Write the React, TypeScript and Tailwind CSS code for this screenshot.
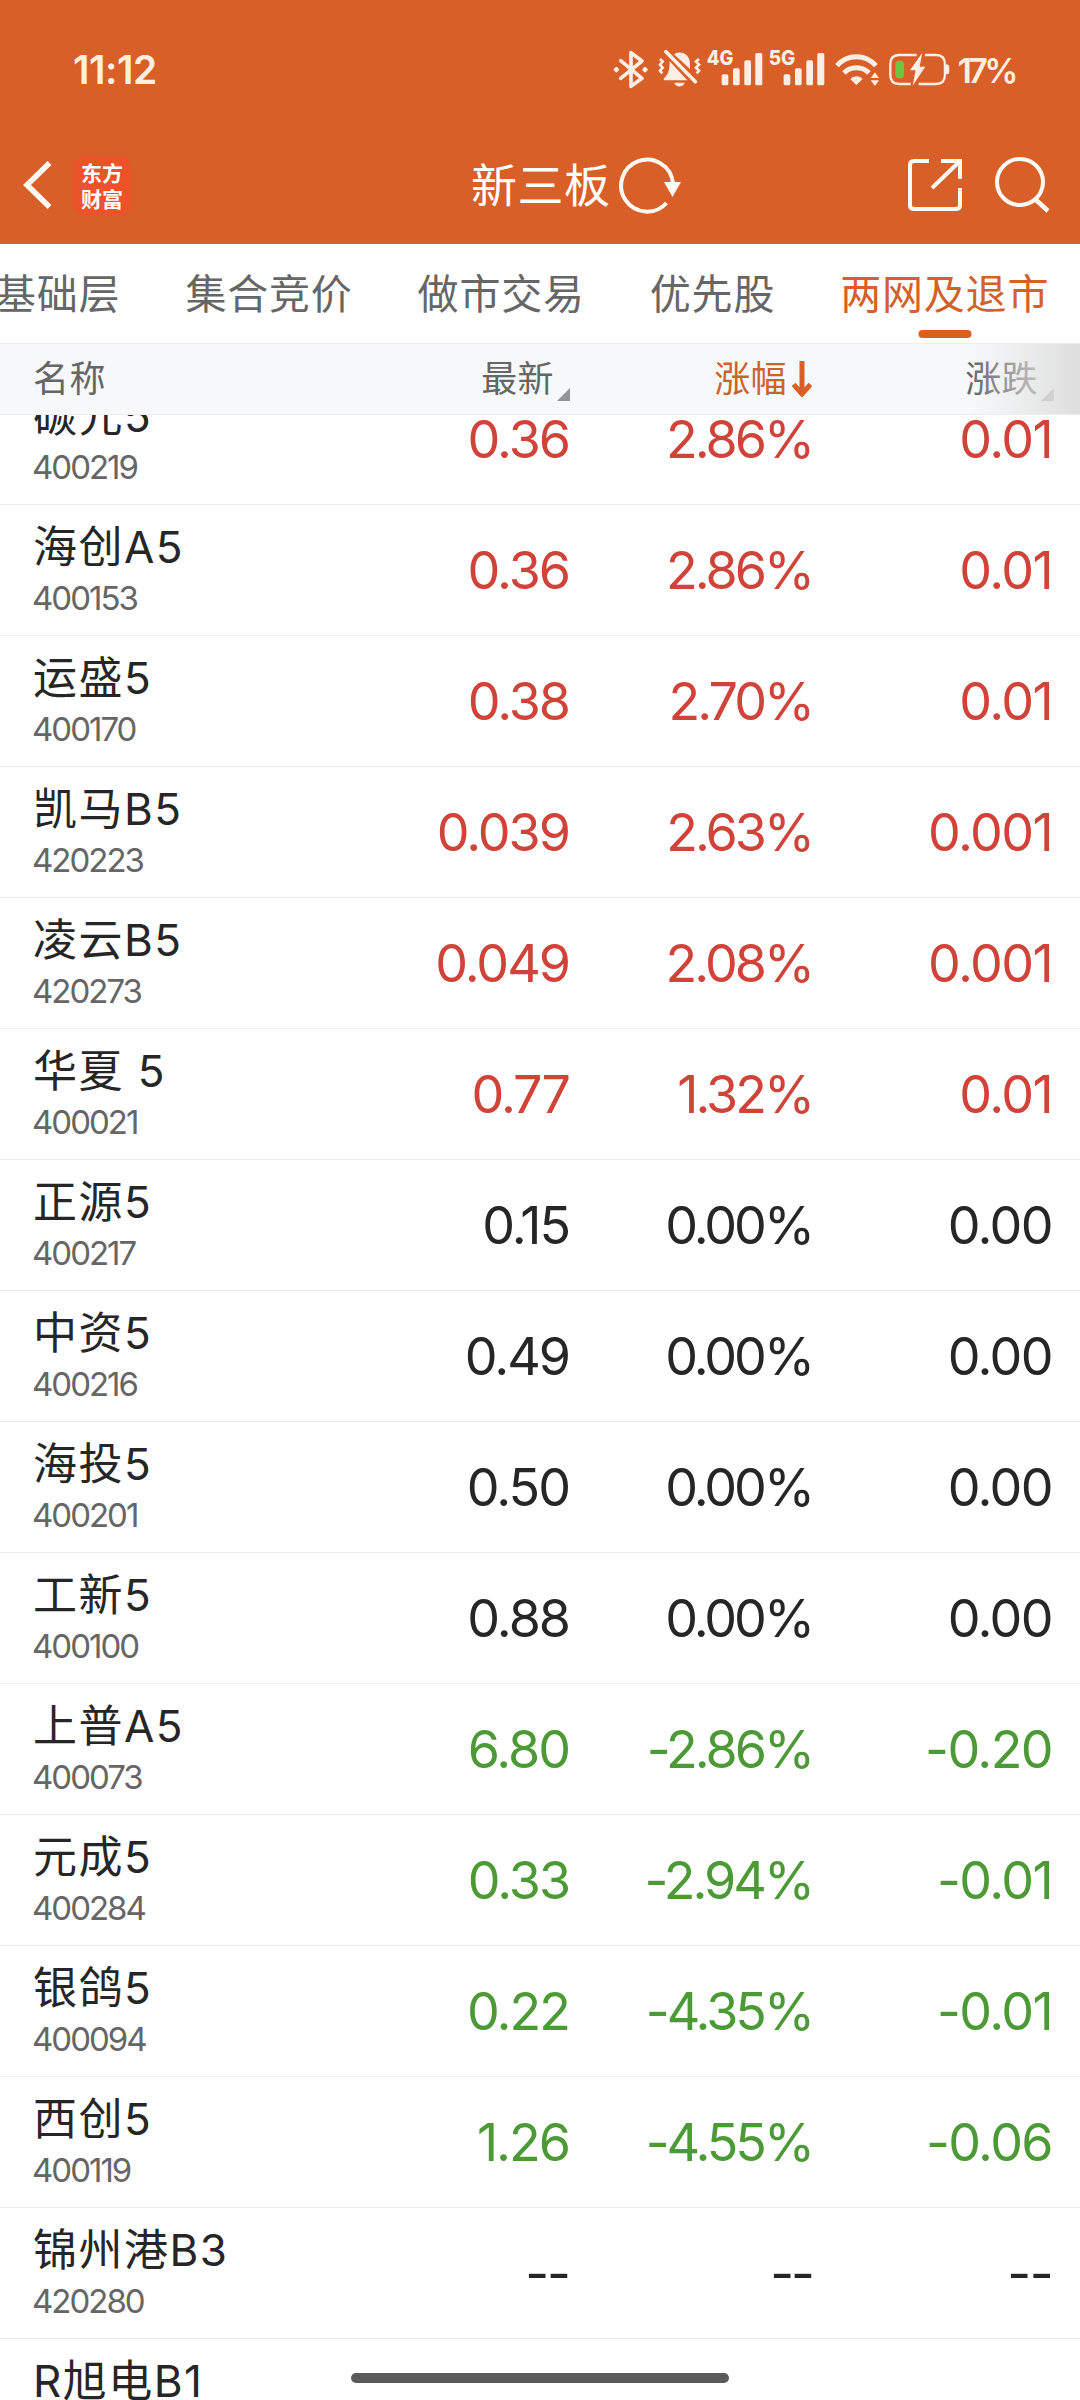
type Tone = 'up' | 'flat' | 'down'

type Stock = {
  name: string
  code: string
  price: string
  percent: string
  change: string
  tone: Tone
}

const tabs = ['基础层', '集合竞价', '做市交易', '优先股', '两网及退市']

const stocks: Stock[] = [
  { name: '碳元5', code: '400219', price: '0.36', percent: '2.86%', change: '0.01', tone: 'up' },
  { name: '海创A5', code: '400153', price: '0.36', percent: '2.86%', change: '0.01', tone: 'up' },
  { name: '运盛5', code: '400170', price: '0.38', percent: '2.70%', change: '0.01', tone: 'up' },
  { name: '凯马B5', code: '420223', price: '0.039', percent: '2.63%', change: '0.001', tone: 'up' },
  { name: '凌云B5', code: '420273', price: '0.049', percent: '2.08%', change: '0.001', tone: 'up' },
  { name: '华夏 5', code: '400021', price: '0.77', percent: '1.32%', change: '0.01', tone: 'up' },
  { name: '正源5', code: '400217', price: '0.15', percent: '0.00%', change: '0.00', tone: 'flat' },
  { name: '中资5', code: '400216', price: '0.49', percent: '0.00%', change: '0.00', tone: 'flat' },
  { name: '海投5', code: '400201', price: '0.50', percent: '0.00%', change: '0.00', tone: 'flat' },
  { name: '工新5', code: '400100', price: '0.88', percent: '0.00%', change: '0.00', tone: 'flat' },
  { name: '上普A5', code: '400073', price: '6.80', percent: '-2.86%', change: '-0.20', tone: 'down' },
  { name: '元成5', code: '400284', price: '0.33', percent: '-2.94%', change: '-0.01', tone: 'down' },
  { name: '银鸽5', code: '400094', price: '0.22', percent: '-4.35%', change: '-0.01', tone: 'down' },
  { name: '西创5', code: '400119', price: '1.26', percent: '-4.55%', change: '-0.06', tone: 'down' },
  { name: '锦州港B3', code: '420280', price: '--', percent: '--', change: '--', tone: 'flat' },
]

const toneClass: Record<Tone, string> = {
  up: 'text-[#cf4339]',
  flat: 'text-[#262626]',
  down: 'text-[#4c9a35]',
}

function Bluetooth() {
  return (
    <svg viewBox="36 30 126 120" className="h-[40px] w-[42px]" fill="none" stroke="#ffeee4" strokeWidth="11" strokeLinejoin="round" strokeLinecap="round">
      <path d="M62 62 L126 115 L93 139 V38 L126 63 L62 115" />
      <path d="M49 83 l6 6 l-6 6 l-6 -6z M135 83 l6 6 l-6 6 l-6 -6z" fill="#ffeee4" strokeWidth="5" />
    </svg>
  )
}

function BellOff() {
  return (
    <svg viewBox="162 30 150 120" className="h-[40px] w-[50px]" fill="#ffeee4">
      <path d="M222 43 C232 32 270 34 270 72 V87 Z" />
      <path d="M209 64 L262 121 H194 C191 121 190 118 192 115 C202 106 209 96 209 64Z" />
      <path d="M223 128 H254 C250 143 227 143 223 128Z" />
      <path d="M198 35 L286 125" stroke="#ffeee4" strokeWidth="11" strokeLinecap="round" />
      <path d="M180 57 l8 8 l-8 9 l8 9 l-8 9 l7 8 M297 57 l-9 8 l9 9 l-9 9 l9 9 l-7 8" fill="none" stroke="#ffeee4" strokeWidth="8" />
    </svg>
  )
}

function Signal({ label }: { label: string }) {
  return (
    <svg viewBox="312 30 187 120" className="h-[40px] w-[62.3px] overflow-visible" fill="#ffeee4">
      <text x="320" y="76" fontSize="60" fontWeight="800" textLength="80" lengthAdjust="spacingAndGlyphs">{label}</text>
      <rect x="365" y="103" width="20" height="33" rx="5" />
      <rect x="399" y="85" width="20" height="51" rx="5" />
      <rect x="433" y="61" width="20" height="75" rx="5" />
      <rect x="466" y="39" width="21" height="97" rx="5" />
    </svg>
  )
}

function Wifi() {
  return (
    <svg viewBox="150 30 175 120" className="h-[40px] w-[58.3px]" fill="none" stroke="#ffeee4" strokeWidth="15">
      <path d="M174 77 C205 41 259 41 291 77" />
      <path d="M195 99 C214 78 250 78 270 99" />
      <path d="M214 117 C225 106 240 106 251 117 L232 135Z" fill="#ffeee4" stroke="none" />
      <path d="M275 114 L288 97 L300 114Z M275 121 L288 138 L300 121Z" fill="#ffeee4" stroke="none" />
    </svg>
  )
}

function Battery() {
  return (
    <svg viewBox="325 30 200 120" className="h-[40px] w-[66.6px]" fill="none" stroke="#ffeee4" strokeWidth="7">
      <path d="M414 45 H362 Q335 45 335 72 V105 Q335 132 362 132 H396" />
      <path d="M439 45 H472 Q499 45 499 72 V105 Q499 132 472 132 H420" />
      <path d="M502 73 Q512 73 512 82 V95 Q512 103 502 103Z" fill="#ffeee4" stroke="none" />
      <rect x="350" y="62" width="26" height="53" rx="11" fill="#6cc53f" stroke="none" />
      <path d="M431 38 L394 91 H411 L402 137 L440 80 H423Z" fill="#ffeee4" stroke="none" />
    </svg>
  )
}

function StatusBar() {
  return (
    <div className="flex h-[140px] items-center pl-[73px] text-[#ffeee4]">
      <span className="w-[539px] text-[39px] font-semibold tracking-[-0.5px]">11:12</span>
      <Bluetooth />
      <BellOff />
      <Signal label="4G" />
      <Signal label="5G" />
      <Wifi />
      <Battery />
      <span className="ml-[4px] text-[34px] font-semibold tracking-[-3.6px]">17%</span>
    </div>
  )
}

function TitleBar() {
  return (
    <div className="flex h-[104px] items-center pb-[14px] text-white">
      <svg viewBox="0 0 32 52" className="ml-[22px] h-[52px] w-[32px]" fill="none" stroke="#fffaf3" strokeWidth="5.5">
        <path d="M27.5 4 L5 26 L27.5 48" />
      </svg>
      <div className="ml-[19px] flex h-[59px] w-[58px] flex-col items-center justify-center rounded-[11px] bg-[#ec5329] font-['Noto_Sans_CJK_SC',sans-serif] text-[21px] leading-[26px] font-bold">
        <span>东方</span>
        <span>财富</span>
      </div>
      <h1 className="ml-[340px] w-[147px] text-[46px] leading-[60px] tracking-[0.5px] whitespace-nowrap">新三板</h1>
      <svg viewBox="0 0 66 60" className="h-[60px] w-[66px]" fill="none" stroke="#fffaf3" strokeWidth="4">
        <path d="M48.5 48 A26 26 0 1 1 55 28" />
        <path d="M46 27 H63 L54.5 42Z" fill="#fffaf3" stroke="none" />
      </svg>
      <svg viewBox="0 0 56 56" className="ml-[223px] h-[56px] w-[56px]" fill="none" stroke="#fffaf3" strokeWidth="4">
        <path d="M22 4 H7 Q3 4 3 8 V48 Q3 52 7 52 H49 Q53 52 53 48 V31" />
        <path d="M34 4 H53 V22 M52 5 L25 31" />
      </svg>
      <svg viewBox="0 0 60 60" className="ml-[31px] h-[60px] w-[60px]" fill="none" stroke="#fffaf3" strokeWidth="4">
        <circle cx="26" cy="27" r="23" />
        <path d="M41 44 L54 56" strokeWidth="4.5" />
      </svg>
    </div>
  )
}

function TabBar() {
  return (
    <nav className="flex h-[99px] gap-[65px] overflow-hidden text-[41px] leading-[50px] tracking-[0.8px] whitespace-nowrap text-[#666666]">
      {tabs.map((tab, i) => (
        <div key={tab} className={`relative flex h-full shrink-0 items-center ${i === 0 ? '-ml-[5px]' : ''} ${i === tabs.length - 1 ? 'text-[#d3612a]' : ''}`}>
          {tab}
          {i === tabs.length - 1 && (
            <span className="absolute bottom-[5px] left-1/2 h-[8px] w-[53px] -translate-x-1/2 rounded-full bg-[#d85f27]" />
          )}
        </div>
      ))}
    </nav>
  )
}

function SortMark() {
  return (
    <svg viewBox="0 0 13 13" className="mb-[13px] ml-[3px] h-[13px] w-[13px] self-end" fill="#939398">
      <path d="M13 0 V13 H0Z" />
    </svg>
  )
}

function TableHead() {
  return (
    <div className="relative flex h-[72px] items-center border-t border-b border-[#ededf0] bg-[#f7f8fa] text-[36px] leading-[50px] tracking-[0.4px] text-[#666666]">
      <span className="w-[300px] pl-[33px]">名称</span>
      <div className="flex h-full w-[270px] items-center justify-end">最新<SortMark /></div>
      <div className="flex h-full w-[242px] items-center justify-end text-[#cc632e]">
        涨幅
        <svg viewBox="0 0 20 36" className="ml-[5px] h-[36px] w-[20px]" fill="none" stroke="#d85f27" strokeWidth="5">
          <path d="M10 0 V33 M1.5 23.5 L10 33 L18.5 23.5" />
        </svg>
      </div>
      <div className="flex h-full w-[242px] items-center justify-end">涨跌<SortMark /></div>
      <div className="absolute inset-y-0 right-0 w-[110px] bg-linear-to-r from-[#dedede]/0 via-[#e4e4e4]/60 to-[#dedede]" />
    </div>
  )
}

function StockRow({ stock }: { stock: Stock }) {
  return (
    <div className="flex h-[131px] shrink-0 border-b border-[#ececec]">
      <div className="w-[300px] pt-[14px] pl-[33px]">
        <div className="text-[44px] leading-[56px] tracking-[1.5px] whitespace-nowrap text-[#262626]">{stock.name}</div>
        <div className="-ml-px mt-[5px] text-[33px] leading-[36px] tracking-[-2px] text-[#666666]">{stock.code}</div>
      </div>
      <div className={`flex items-center pt-[2px] text-right text-[52px] tracking-[-2px] ${toneClass[stock.tone]}`}>
        <span className="w-[269px]">{stock.price}</span>
        <span className="w-[243px] tracking-[-3px]">{stock.percent}</span>
        <span className="w-[240px] tracking-[-1.6px]">{stock.change}</span>
      </div>
    </div>
  )
}

export default function App() {
  return (
    <div className="relative flex h-[2400px] w-[1080px] flex-col overflow-hidden bg-white font-['Inter','Noto_Sans_CJK_SC',sans-serif]">
      <header className="bg-[#d85f27]">
        <StatusBar />
        <TitleBar />
      </header>
      <TabBar />
      <TableHead />
      <main className="flex-1 overflow-hidden">
        <div className="-mt-[41px] flex flex-col">
          {stocks.map((stock) => (
            <StockRow key={stock.code} stock={stock} />
          ))}
          {/* last row runs off the bottom of the screen */}
          <div className="pt-[14px] pl-[33px] text-[44px] leading-[56px] tracking-[1.5px] text-[#262626]">R旭电B1</div>
        </div>
      </main>
      <div className="absolute bottom-[17px] left-[351px] h-[10px] w-[378px] rounded-full bg-[#5a5a5a]" />
    </div>
  )
}
